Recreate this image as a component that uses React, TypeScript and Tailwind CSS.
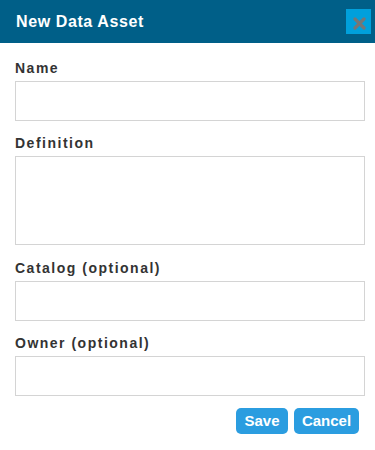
import React from "react";

const Label = ({ children }: { children: React.ReactNode }) => (
  <div className="text-[14px] font-bold tracking-[1.5px] text-[#333] leading-[19px] mb-[3px]">{children}</div>
);

export default function App() {
  return (
    <div className="w-[375px] h-[450px] bg-white" style={{ fontFamily: '"Liberation Sans", Arial, sans-serif' }}>
      <div className="h-[43px] bg-[#005f88] flex items-center justify-between pl-[16px] pr-[4px]">
        <span className="text-white font-bold text-[16px] tracking-[0.6px]">New Data Asset</span>
        <div className="w-[25px] h-[25px] bg-[#00a0dc] flex items-center justify-center pt-[3px] pl-[2px]">
          <svg width="13" height="13" viewBox="0 0 13 13">
            <path d="M2 2 L11 11 M11 2 L2 11" stroke="#767676" strokeWidth="3.2" strokeLinecap="round" />
          </svg>
        </div>
      </div>
      <div className="pl-[15px] pr-[10px] pt-[16px] flex flex-col">
        <Label>Name</Label>
        <input className="h-[40px] border border-[#d4d4d4] outline-none" />
        <div className="h-[13px]" />
        <Label>Definition</Label>
        <textarea className="h-[89px] border border-[#d4d4d4] outline-none resize-none" />
        <div className="h-[14px]" />
        <Label>Catalog (optional)</Label>
        <input className="h-[40px] border border-[#d4d4d4] outline-none" />
        <div className="h-[13px]" />
        <Label>Owner (optional)</Label>
        <input className="h-[40px] border border-[#d4d4d4] outline-none" />
        <div className="flex justify-end gap-[6px] mt-[12px] pr-[6px]">
          <button className="h-[26px] w-[52px] rounded-[5px] bg-[#2b9de0] text-white font-bold text-[15px]">Save</button>
          <button className="h-[26px] w-[65px] rounded-[5px] bg-[#2b9de0] text-white font-bold text-[15px]">Cancel</button>
        </div>
      </div>
    </div>
  );
}
